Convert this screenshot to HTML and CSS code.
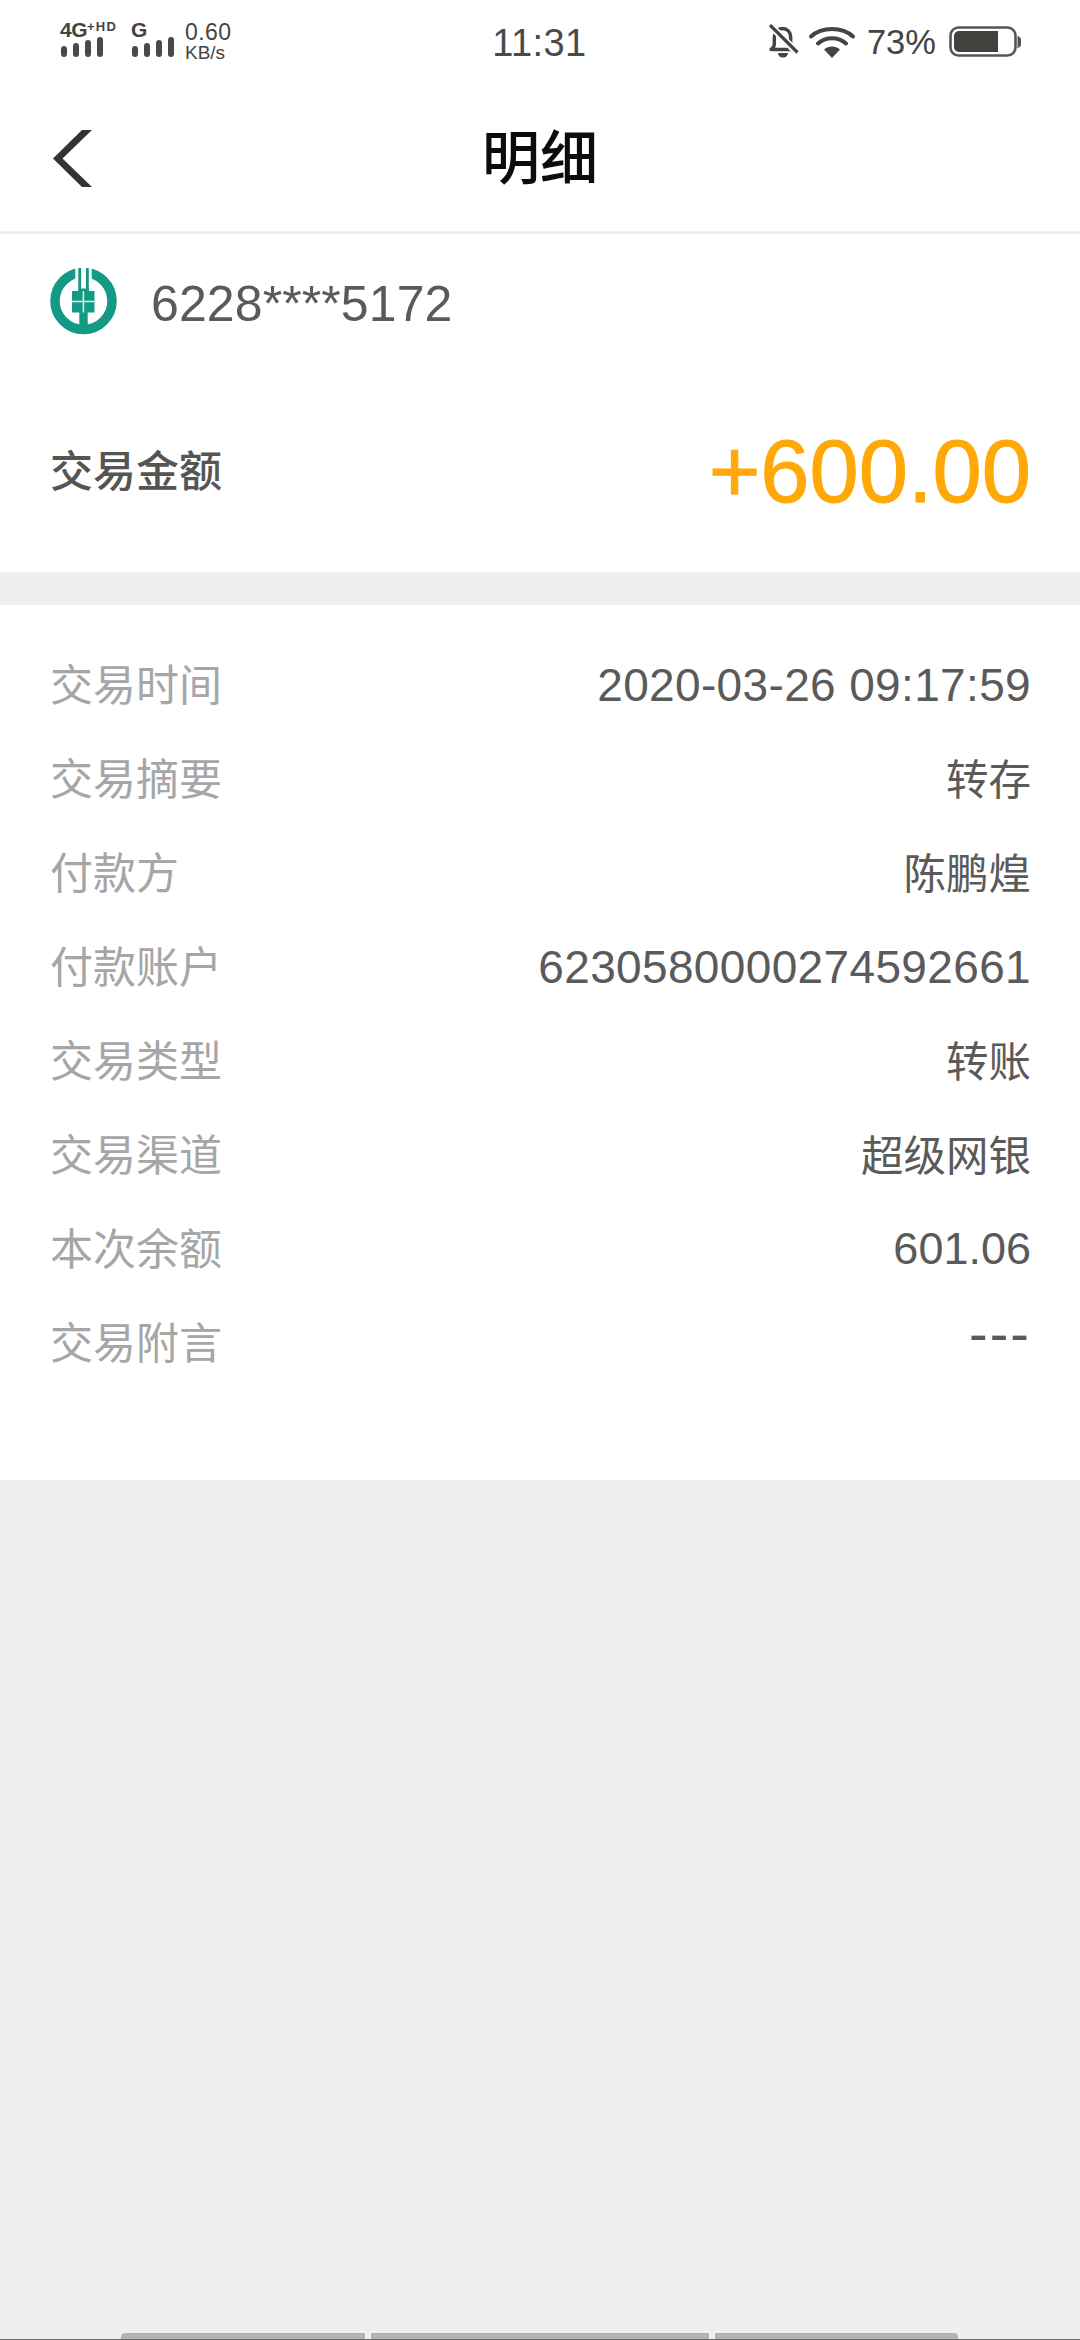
FILE: index.html
```html
<!DOCTYPE html>
<html lang="zh-CN">
<head>
<meta charset="utf-8">
<title>明细</title>
<link rel="stylesheet" href="styles.css">
</head>
<body>
<div class="page">
  <header class="top">
    <div class="status">
      <div class="status-left">
        <div class="net net-a">
          <div class="net-label"><span class="net-main">4G</span><span class="net-sup">+HD</span></div>
          <div class="bars"><i class="b1"></i><i class="b2"></i><i class="b3"></i><i class="b4"></i></div>
        </div>
        <div class="net net-b">
          <div class="net-label"><span class="net-main">G</span></div>
          <div class="bars"><i class="b1"></i><i class="b2"></i><i class="b3"></i><i class="b4"></i></div>
        </div>
        <div class="speed"><span class="speed-num">0.60</span><span class="speed-unit">KB/s</span></div>
      </div>
      <div class="time">11:31</div>
      <div class="status-right">
        <svg class="ic-bell" width="32" height="36" viewBox="0 0 32 36"><path d="M4 25.500c2.500-1.500 3.300-2.800 3.300-5.500v-7c0-5 3.600-8.500 8.200-8.500s8.200 3.500 8.200 8.500v7c0 2.700.8 4 3.300 5.500z" fill="none" stroke="#444" stroke-width="3.400" stroke-linejoin="round"/><path d="M11 29h10a5 4.500 0 0 1-10 0z" fill="#444"/><path d="M3.500 1.500 L30 28.500" stroke="#fff" stroke-width="7"/><path d="M3 1 L30.500 28.500" stroke="#444" stroke-width="3.200"/></svg>
        <svg class="ic-wifi" width="46" height="34" viewBox="0 0 46 34"><path d="M2 11.500C13 1.500 33 1.500 44 11.500M9 18.500C16.500 11.500 29.500 11.500 37 18.500" fill="none" stroke="#444" stroke-width="4" stroke-linecap="round"/><path d="M15 24.500c4.500-4 11.500-4 16 0l-8 8.500z" fill="#444"/></svg>
        <span class="pct">73%</span>
        <svg class="ic-batt" width="72" height="32" viewBox="0 0 72 32"><rect x="1.500" y="1.500" width="65" height="28" rx="8" fill="none" stroke="#555" stroke-width="2.600"/><path d="M10 5h39v21H10a5 5 0 0 1-5-5V10a5 5 0 0 1 5-5z" fill="#41413e"/><path d="M68.500 10a4 6 0 0 1 0 12z" fill="#555"/></svg>
      </div>
    </div>
    <div class="nav">
      <svg class="back" width="42" height="57" viewBox="0 0 42 57"><polygon points="32,0 42,0 12.500,28.500 42,57 32,57 3,28.500" fill="#333"/></svg>
      <h1 class="title">明细</h1>
    </div>
  </header>

  <section class="summary">
    <div class="card">
      <svg class="logo" width="68" height="68" viewBox="0 0 68 68">
        <circle cx="33.500" cy="33" r="28.500" fill="none" stroke="#149a84" stroke-width="9.500"/>
        <rect x="25.300" y="0" width="16.400" height="23" fill="#fff"/>
        <rect x="28.300" y="0" width="2.800" height="23" fill="#149a84"/>
        <rect x="36" y="0" width="2.800" height="23" fill="#149a84"/>
        <rect x="28.300" y="20.500" width="10.500" height="3" fill="#149a84"/>
        <rect x="22" y="23" width="22.500" height="21.500" fill="#149a84"/>
        <rect x="29.300" y="44" width="8.400" height="22" fill="#149a84"/>
        <path d="M33.400 23V44.500M22 33.400H44.500" stroke="#dff1ee" stroke-width="1.500"/>
      </svg>
      <span class="card-no">6228****5172</span>
    </div>
    <div class="amount-row">
      <span class="amount-label">交易金额</span>
      <span class="amount">+600.00</span>
    </div>
  </section>

  <section class="details">
    <div class="row"><span class="k">交易时间</span><span class="v num">2020-03-26 09:17:59</span></div>
    <div class="row"><span class="k">交易摘要</span><span class="v">转存</span></div>
    <div class="row"><span class="k">付款方</span><span class="v">陈鹏煌</span></div>
    <div class="row"><span class="k">付款账户</span><span class="v num">6230580000274592661</span></div>
    <div class="row"><span class="k">交易类型</span><span class="v">转账</span></div>
    <div class="row"><span class="k">交易渠道</span><span class="v">超级网银</span></div>
    <div class="row"><span class="k">本次余额</span><span class="v num short">601.06</span></div>
    <div class="row"><span class="k">交易附言</span><span class="v dash">---</span></div>
  </section>

  <div class="spacer"></div>

  <footer class="home">
    <i class="seg seg-l"></i><i class="seg seg-m"></i><i class="seg seg-r"></i>
  </footer>
</div>
</body>
</html>
```

FILE: styles.css
```css
* { box-sizing: border-box; }
html, body { margin: 0; padding: 0; }
body {
  font-family: "Liberation Sans", "Noto Sans CJK SC", sans-serif;
  background: #efefef;
}
.page {
  width: 1080px;
  height: 2340px;
  display: flex;
  flex-direction: column;
  overflow: hidden;
}
.top {
  height: 234px;
  background: #fff;
  border-bottom: 3px solid #f0f0f0;
}
.status {
  height: 84px;
  padding: 0 59px 0 58px;
  display: grid;
  grid-template-columns: 1fr auto 1fr;
  align-items: center;
  color: #444;
}
.status-left {
  display: flex;
  align-items: flex-start;
  align-self: start;
  padding: 20px 0 0 2px;
}
.net { display: flex; flex-direction: column; }
.net-a { width: 71px; }
.net-b { width: 54px; }
.net-label { display: flex; height: 17px; font-weight: 700; line-height: 20px; }
.net-main { font-size: 21px; letter-spacing: -.5px; }
.net-sup { font-size: 13px; line-height: 13px; letter-spacing: 1.200px; }
.bars { display: flex; align-items: flex-end; gap: 6px; height: 20px; padding-left: 1px; }
.bars i { display: block; width: 6px; border-radius: 3px; background: #4a4a4a; }
.b1 { height: 11px; }
.b2 { height: 14px; }
.b3 { height: 17px; }
.b4 { height: 20px; }
.speed { display: flex; flex-direction: column; margin-top: 1px; }
.speed-num { font-size: 23px; line-height: 22px; letter-spacing: .4px; }
.speed-unit { font-size: 19px; line-height: 19px; }
.time { font-size: 38px; letter-spacing: .4px; color: #4a4a4a; padding-top: 2px; }
.status-right { display: flex; align-items: center; justify-content: flex-end; }
.ic-bell { margin-right: 10px; }
.ic-wifi { margin-right: 12px; }
.pct { font-size: 34.500px; margin-right: 13px; }
.nav {
  height: 147px;
  display: flex;
  align-items: center;
  justify-content: center;
  position: relative;
}
.back { position: absolute; left: 50px; top: 46px; }
.title {
  margin: 2px 0 0;
  font-size: 58px;
  font-weight: 500;
  line-height: 1;
  color: #0c0c0c;
}
.summary {
  height: 338px;
  background: #fff;
  padding: 34px 49px 0 50px;
}
.card { display: flex; align-items: center; height: 68px; }
.card-no { margin: 3px 0 0 33px; font-size: 50px; letter-spacing: .1px; color: #5a5a5a; }
.amount-row {
  margin-top: 83px;
  display: flex;
  justify-content: space-between;
  align-items: center;
  height: 100px;
}
.amount-label { font-size: 43px; font-weight: 500; color: #555; padding-bottom: 3px; }
.amount { font-size: 88.500px; color: #ffa808; -webkit-text-stroke: 1px #ffa808; padding-top: 5px; }
.details {
  margin-top: 33px;
  height: 875px;
  background: #fff;
  padding: 30px 49px 0 50px;
}
.row {
  height: 94px;
  display: flex;
  justify-content: space-between;
  align-items: center;
}
.k { font-size: 43px; color: #a6a6a6; }
.v { font-size: 42.500px; color: #5a5a5a; }
.num { font-size: 46px; letter-spacing: .35px; padding-top: 6px; }
.short { font-size: 45px; letter-spacing: 0; }
.dash { font-size: 56px; letter-spacing: 2px; line-height: 1; margin-top: -12px; }
.spacer { flex: 1; }
.home {
  height: 7px;
  padding-left: 121px;
  display: flex;
  gap: 6px;
  border-bottom: 1px solid #6e6e6e;
}
.seg { display: block; height: 6px; background: #b3b3b3; }
.seg-l { width: 244px; border-radius: 4px 0 0 0; }
.seg-m { width: 338px; }
.seg-r { width: 243px; border-radius: 0 4px 0 0; }
```
